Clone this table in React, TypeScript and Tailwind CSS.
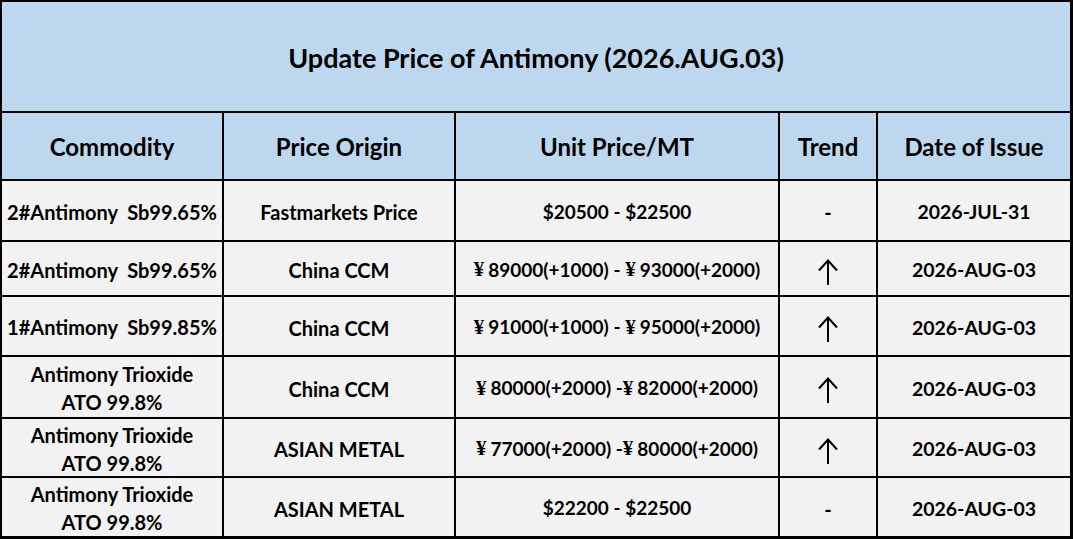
import React from 'react';

type Row = {
  commodity: string[];
  origin: string;
  price: React.ReactNode;
  trend: 'up' | 'flat';
  date: string;
};

const Yen = () => (
  <span className="font-['Liberation_Serif',serif] font-bold text-[21px] mr-[4px]">¥</span>
);

const UpArrow = () => (
  <svg width="20" height="26" viewBox="0 0 20 26" fill="none" stroke="#000" strokeWidth="2" className="mt-[3px]">
    <path d="M10 1.5V26" />
    <path d="M1 11.5L10 1.5L19 11.5" />
  </svg>
);

const rows: Row[] = [
  {
    commodity: ['2#Antimony  Sb99.65%'],
    origin: 'Fastmarkets Price',
    price: '$20500 - $22500',
    trend: 'flat',
    date: '2026-JUL-31',
  },
  {
    commodity: ['2#Antimony  Sb99.65%'],
    origin: 'China CCM',
    price: (
      <>
        <Yen />89000(+1000) - <Yen />93000(+2000)
      </>
    ),
    trend: 'up',
    date: '2026-AUG-03',
  },
  {
    commodity: ['1#Antimony  Sb99.85%'],
    origin: 'China CCM',
    price: (
      <>
        <Yen />91000(+1000) - <Yen />95000(+2000)
      </>
    ),
    trend: 'up',
    date: '2026-AUG-03',
  },
  {
    commodity: ['Antimony Trioxide', 'ATO 99.8%'],
    origin: 'China CCM',
    price: (
      <>
        <Yen />80000(+2000) -<Yen />82000(+2000)
      </>
    ),
    trend: 'up',
    date: '2026-AUG-03',
  },
  {
    commodity: ['Antimony Trioxide', 'ATO 99.8%'],
    origin: 'ASIAN METAL',
    price: (
      <>
        <Yen />77000(+2000) -<Yen />80000(+2000)
      </>
    ),
    trend: 'up',
    date: '2026-AUG-03',
  },
  {
    commodity: ['Antimony Trioxide', 'ATO 99.8%'],
    origin: 'ASIAN METAL',
    price: '$22200 - $22500',
    trend: 'flat',
    date: '2026-AUG-03',
  },
];

const headers = ['Commodity', 'Price Origin', 'Unit Price/MT', 'Trend', 'Date of Issue'];

export default function App() {
  return (
    <div className="w-[1073px] h-[539px] bg-white font-['Lato',sans-serif] font-bold text-black">
      <div className="grid grid-cols-[220px_230px_322px_96px_192px] grid-rows-[109px_66px_59px_53px_58px_60px_57px_58px] gap-[2px] bg-black pt-[2px] pl-[2px] pr-[3px] pb-[3px]">
        {/* Title */}
        <div className="col-span-5 flex items-center justify-center bg-[#bdd7ee] text-[27px] pt-[4px]">
          Update Price of Antimony (2026.AUG.03)
        </div>

        {/* Column headers */}
        {headers.map((h) => (
          <div key={h} className="flex items-center justify-center bg-[#bdd7ee] text-[24px] pt-[2px]">
            {h}
          </div>
        ))}

        {/* Data rows */}
        {rows.map((r, i) => (
          <React.Fragment key={i}>
            <div className="flex flex-col items-center justify-center bg-[#f2f2f2] text-[20px] leading-[28px] whitespace-pre pt-[2px]">
              {r.commodity.map((line) => (
                <span key={line}>{line}</span>
              ))}
            </div>
            <div className="flex items-center justify-center bg-[#f2f2f2] text-[20px] pt-[3px]">{r.origin}</div>
            <div className="flex items-center justify-center bg-[#f2f2f2] text-[19px] whitespace-pre pt-[3px]">{r.price}</div>
            <div className="flex items-center justify-center bg-[#f2f2f2] text-[20px] pt-[3px]">
              {r.trend === 'up' ? <UpArrow /> : '-'}
            </div>
            <div className="flex items-center justify-center bg-[#f2f2f2] text-[19.5px] pt-[3px]">{r.date}</div>
          </React.Fragment>
        ))}
      </div>
    </div>
  );
}
